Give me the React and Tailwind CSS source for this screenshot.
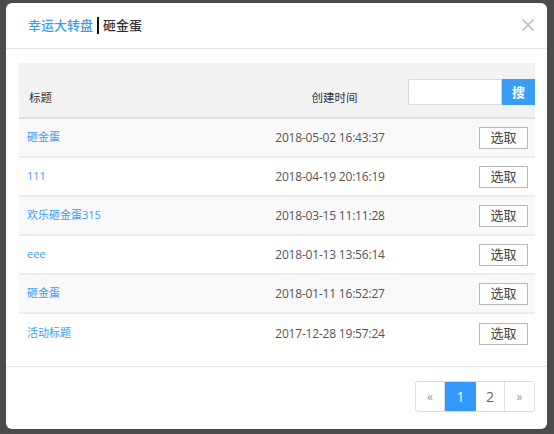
import React from "react";

const rows = [
  ["砸金蛋", "2018-05-02 16:43:37"],
  ["111", "2018-04-19 20:16:19"],
  ["欢乐砸金蛋315", "2018-03-15 11:11:28"],
  ["eee", "2018-01-13 13:56:14"],
  ["砸金蛋", "2018-01-11 16:52:27"],
  ["活动标题", "2017-12-28 19:57:24"],
];

export default function App() {
  return (
    <div
      className="w-[554px] h-[434px] bg-[#4b4b4b] pt-[3px] pl-[6px] overflow-hidden"
      style={{ fontFamily: '"Open Sans", "Noto Sans CJK SC", sans-serif' }}
    >
      <div className="w-[541px] h-[426px] bg-white rounded-[6px] flex flex-col">
        {/* header */}
        <div className="h-[46px] border-b border-[#e5e5e5] flex items-center pl-[22px] pr-[13px] shrink-0">
          <span className="text-[13px] text-[#3a9cf5] font-medium">幸运大转盘</span>
          <span className="w-[2px] h-[17px] bg-[#111] mx-[4px]"></span>
          <span className="text-[13px] text-[#333] font-medium">砸金蛋</span>
          <svg className="ml-auto -mt-[2px]" width="12" height="12" viewBox="0 0 12 12">
            <path d="M1 1 L11 11 M11 1 L1 11" stroke="#c6c6c6" strokeWidth="1.9" strokeLinecap="square" />
          </svg>
        </div>
        {/* body */}
        <div className="px-[13px] pt-[14px] h-[317px] shrink-0">
          <div className="w-[516px]">
            <div className="h-[56px] bg-[#f3f3f3] border-b-2 border-[#dedede] flex text-[11.5px] text-[#333]">
              <div className="w-[231px] pl-[10px] flex items-end pb-[11px]">标题</div>
              <div className="w-[160px] flex items-end justify-center pb-[11px] pl-[12px]">创建时间</div>
              <div className="flex-1 flex items-start justify-end pt-[16px]">
                <input className="w-[94px] h-[26px] border border-[#d9d9d9] bg-white rounded-l-[2px] outline-none" />
                <button className="w-[33px] h-[26px] bg-[#3a9cf5] text-white text-[13px] font-bold leading-none">搜</button>
              </div>
            </div>
            {rows.map(([t, d], i) => (
              <div
                key={i}
                className={
                  "h-[39px] flex items-center " +
                  (i % 2 === 0 ? "bg-[#f9f9f9] " : "bg-white ") +
                  (i < 5 ? "border-b-2 border-[#ececec]" : "")
                }
              >
                <div className="w-[231px] pl-[8px] text-[11px] text-[#3a9cf5]">{t}</div>
                <div className="w-[160px] text-center text-[12px] text-[#555] tracking-[-0.2px]">{d}</div>
                <div className="flex-1 flex justify-end pr-[7px]">
                  <button className="w-[49px] h-[22px] border border-[#b8b8b8] bg-white text-[13px] text-[#444] leading-none">
                    选取
                  </button>
                </div>
              </div>
            ))}
          </div>
        </div>
        {/* footer */}
        <div className="border-t border-[#e5e5e5] flex-1 flex justify-end items-start pt-[14px] pr-[12px]">
          <div className="flex h-[31px] border border-[#dddddd] rounded-[3px] overflow-hidden text-[14px]">
            <div className="w-[29px] flex items-center justify-center text-[#999] text-[12px] border-r border-[#dddddd]">«</div>
            <div className="w-[31px] flex items-center justify-center bg-[#3399ff] text-white">1</div>
            <div className="w-[29px] flex items-center justify-center text-[#666] border-r border-[#dddddd]">2</div>
            <div className="w-[29px] flex items-center justify-center text-[#999] text-[12px]">»</div>
          </div>
        </div>
      </div>
    </div>
  );
}
